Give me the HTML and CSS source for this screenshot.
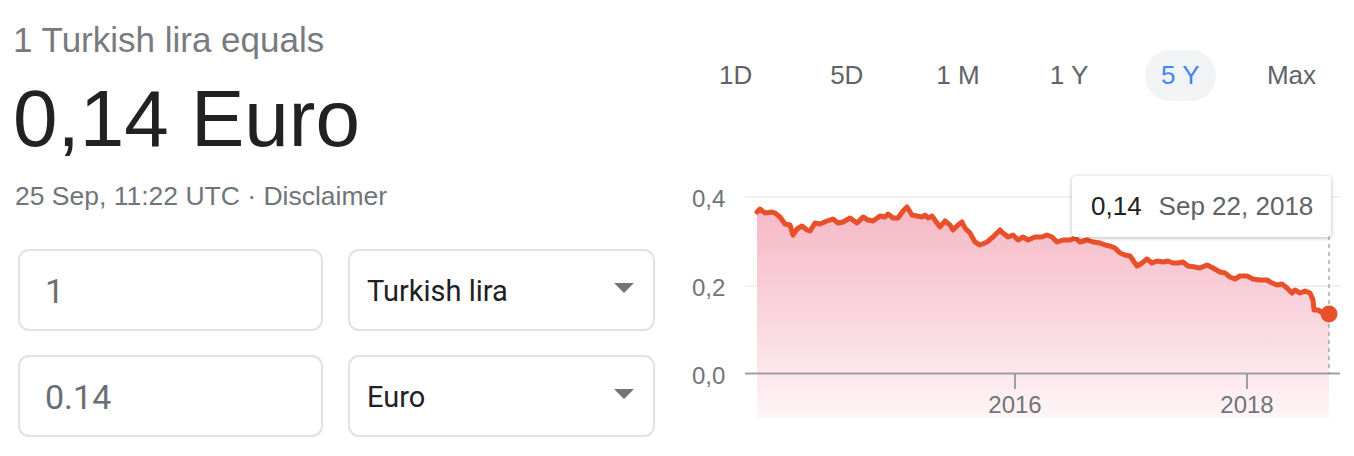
FILE: index.html
```html
<!DOCTYPE html>
<html lang="en">
<head>
<meta charset="utf-8">
<title>Turkish lira to Euro</title>
<link rel="stylesheet" href="styles.css">
</head>
<body>
<div class="page">
  <section class="summary">
    <div class="eq">1 Turkish lira equals</div>
    <div class="rate">0,14 Euro</div>
    <div class="meta">25 Sep, 11:22 UTC · <span class="disc">Disclaimer</span></div>
    <div class="converter">
      <div class="field amount">1</div>
      <div class="field select"><span>Turkish lira</span><span class="caret"></span></div>
      <div class="field amount">0.14</div>
      <div class="field select"><span>Euro</span><span class="caret"></span></div>
    </div>
  </section>
  <section class="chart-col">
    <nav class="ranges">
      <div class="range"><span class="pill">1D</span></div>
      <div class="range"><span class="pill">5D</span></div>
      <div class="range"><span class="pill">1 M</span></div>
      <div class="range"><span class="pill">1 Y</span></div>
      <div class="range"><span class="pill active">5 Y</span></div>
      <div class="range"><span class="pill">Max</span></div>
    </nav>
    <div class="chart">
      <svg class="plot" width="674" height="260" viewBox="680 170 674 260" xmlns="http://www.w3.org/2000/svg">
        <defs>
          <linearGradient id="fillGrad" x1="0" y1="0" x2="0" y2="1">
            <stop offset="0" stop-color="#f6b8c7"/>
            <stop offset="0.55" stop-color="#fad8e0"/>
            <stop offset="1" stop-color="#fff5f7"/>
          </linearGradient>
        </defs>
        <line class="grid" x1="745" y1="197" x2="1340" y2="197"/>
        <line class="grid" x1="745" y1="286" x2="1340" y2="286"/>
        <text class="ylab" x="692" y="207">0,4</text>
        <text class="ylab" x="692" y="296">0,2</text>
        <text class="ylab" x="692" y="384">0,0</text>
        <polygon fill="url(#fillGrad)" points="757,212 760,209 765,213 772,212 775,213 780,217 785,224 790,225 793,235 797,229 802,226 807,230 810,231 815,223 820,224 827,221 833,219 838,223 843,222 850,218 857,223 863,217 868,220 873,221 880,216 885,217 888,214 893,218 898,218 903,211 907,207 912,215 917,216 922,217 925,215 928,218 932,216 937,223 940,227 945,221 950,225 953,230 958,225 962,222 965,228 970,233 975,242 980,245 987,242 993,237 1000,230 1003,233 1008,237 1013,235 1018,240 1023,237 1028,240 1035,237 1042,237 1047,235 1052,237 1057,242 1063,240 1070,240 1075,238 1080,242 1087,240 1093,242 1100,243 1105,245 1110,246 1115,248 1120,253 1125,255 1130,256 1137,266 1142,263 1147,259 1152,263 1157,261 1163,262 1168,261 1173,263 1178,263 1183,262 1188,266 1195,267 1200,268 1207,265 1213,268 1220,272 1225,273 1230,277 1235,279 1240,276 1247,276 1253,279 1260,280 1267,280 1272,283 1277,285 1282,284 1287,288 1292,293 1295,290 1300,293 1305,291 1310,293 1313,300 1314,310 1318,310 1323,313 1329,314 1329,418 757,418"/>
        <line class="axis" x1="745" y1="373.5" x2="1340" y2="373.5"/>
        <line class="axis" x1="1015" y1="374" x2="1015" y2="389"/>
        <line class="axis" x1="1247" y1="374" x2="1247" y2="389"/>
        <text class="xlab" x="1015" y="413">2016</text>
        <text class="xlab" x="1247" y="413">2018</text>
        <line class="cursor" x1="1329" y1="236" x2="1329" y2="374"/>
        <polyline class="series" points="757,212 760,209 765,213 772,212 775,213 780,217 785,224 790,225 793,235 797,229 802,226 807,230 810,231 815,223 820,224 827,221 833,219 838,223 843,222 850,218 857,223 863,217 868,220 873,221 880,216 885,217 888,214 893,218 898,218 903,211 907,207 912,215 917,216 922,217 925,215 928,218 932,216 937,223 940,227 945,221 950,225 953,230 958,225 962,222 965,228 970,233 975,242 980,245 987,242 993,237 1000,230 1003,233 1008,237 1013,235 1018,240 1023,237 1028,240 1035,237 1042,237 1047,235 1052,237 1057,242 1063,240 1070,240 1075,238 1080,242 1087,240 1093,242 1100,243 1105,245 1110,246 1115,248 1120,253 1125,255 1130,256 1137,266 1142,263 1147,259 1152,263 1157,261 1163,262 1168,261 1173,263 1178,263 1183,262 1188,266 1195,267 1200,268 1207,265 1213,268 1220,272 1225,273 1230,277 1235,279 1240,276 1247,276 1253,279 1260,280 1267,280 1272,283 1277,285 1282,284 1287,288 1292,293 1295,290 1300,293 1305,291 1310,293 1313,300 1314,310 1318,310 1323,313 1329,314"/>
        <circle class="dot" cx="1329" cy="314" r="8.5"/>
      </svg>
      <div class="tooltip"><span class="tip-val">0,14</span><span class="tip-date">Sep 22, 2018</span></div>
    </div>
  </section>
</div>
</body>
</html>
```
FILE: styles.css
```css
* { box-sizing: border-box; }

html, body {
  margin: 0;
  padding: 0;
  background: #ffffff;
}

body {
  font-family: "Liberation Sans", Arial, sans-serif;
  color: #222222;
  width: 1354px;
  height: 456px;
  overflow: hidden;
}

.page {
  display: flex;
  flex-direction: row;
}

.summary {
  width: 680px;
  flex: 0 0 680px;
  padding: 20px 0 0 13px;
  display: flex;
  flex-direction: column;
}

.eq {
  font-size: 35px;
  line-height: 40px;
  color: #777a7e;
}

.rate {
  margin-top: 14px;
  font-size: 80px;
  line-height: 90px;
  color: #222222;
}

.meta {
  margin-top: 17px;
  font-size: 26.5px;
  line-height: 30px;
  color: #70757a;
  padding-left: 2px;
}

.disc {
  color: #70757a;
}

.converter {
  margin-top: 38px;
  margin-left: 5px;
  display: grid;
  grid-template-columns: 305px 307px;
  grid-auto-rows: 82px;
  column-gap: 25px;
  row-gap: 24px;
}

.field {
  border: 2px solid #e1e2e5;
  border-radius: 11px;
  display: flex;
  align-items: center;
}

.amount {
  padding-left: 25px;
  font-family: Roboto, "Liberation Sans", sans-serif;
  font-size: 34px;
  color: #6b6f74;
  padding-top: 2px;
}

.select {
  justify-content: space-between;
  padding: 2px 19px 0 17px;
  font-family: Roboto, "Liberation Sans", sans-serif;
  font-size: 29px;
  color: #202124;
}

.caret {
  width: 0;
  height: 0;
  border-left: 10px solid transparent;
  border-right: 10px solid transparent;
  border-top: 10px solid #70757a;
  margin-top: -6px;
}

.chart-col {
  flex: 1 1 auto;
  padding-top: 50px;
  display: flex;
  flex-direction: column;
}

.ranges {
  display: flex;
  width: 667px;
}

.range {
  flex: 1 1 0;
  display: flex;
  justify-content: center;
}

.pill {
  display: inline-block;
  padding: 10px 16px;
  line-height: 31px;
  font-size: 26px;
  color: #5f6368;
  border-radius: 26px;
}

.pill.active {
  background: #f1f3f4;
  color: #4285f4;
}

.chart {
  position: relative;
  margin-top: 69px;
  height: 260px;
}

.plot {
  display: block;
}

.grid {
  stroke: #ececec;
  stroke-width: 1.5;
}

.axis {
  stroke: #9aa0a6;
  stroke-width: 2;
}

.ylab {
  font-family: "Liberation Sans", Arial, sans-serif;
  font-size: 24px;
  fill: #70757a;
}

.xlab {
  font-family: "Liberation Sans", Arial, sans-serif;
  font-size: 24px;
  fill: #70757a;
  text-anchor: middle;
}

.cursor {
  stroke: #80868b;
  stroke-width: 1;
  stroke-dasharray: 4 4;
}

.series {
  fill: none;
  stroke: #e8502a;
  stroke-width: 5;
  stroke-linejoin: round;
  stroke-linecap: round;
}

.dot {
  fill: #e8502a;
}

.tooltip {
  position: absolute;
  left: 392px;
  top: 6px;
  width: 259px;
  height: 61px;
  background: #ffffff;
  border-radius: 4px;
  box-shadow: 0 1px 4px rgba(0, 0, 0, 0.28);
  display: flex;
  align-items: center;
  padding-left: 19px;
  font-size: 26px;
  white-space: nowrap;
}

.tip-val {
  color: #202124;
  margin-right: 17px;
}

.tip-date {
  color: #5f6368;
}
```
